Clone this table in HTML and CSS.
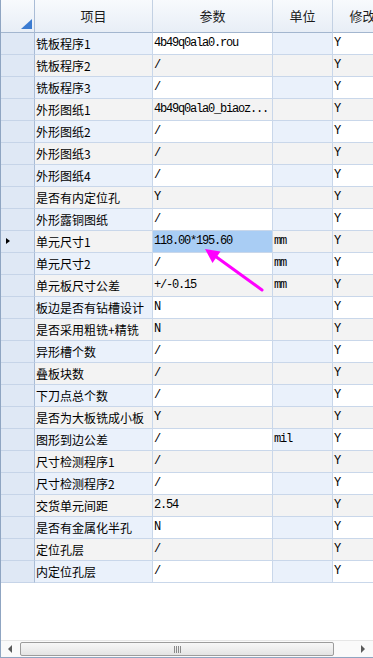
FILE: index.html
```html
<!DOCTYPE html>
<html>
<head>
<meta charset="utf-8">
<link rel="stylesheet" href="styles.css">
</head>
<body>
<div class="grid">
  <div class="row head">
    <div class="c rh corner"><span class="corner-tri"></span></div>
    <div class="c">项目</div>
    <div class="c">参数</div>
    <div class="c">单位</div>
    <div class="c">修改</div>
  </div>
  <div class="rows">
    <div class="row odd"><div class="c rh"></div><div class="c n">铣板程序1</div><div class="c v">4b49q0ala0.rou</div><div class="c u"></div><div class="c m">Y</div></div>
    <div class="row even"><div class="c rh"></div><div class="c n">铣板程序2</div><div class="c v">/</div><div class="c u"></div><div class="c m">Y</div></div>
    <div class="row odd"><div class="c rh"></div><div class="c n">铣板程序3</div><div class="c v">/</div><div class="c u"></div><div class="c m">Y</div></div>
    <div class="row even"><div class="c rh"></div><div class="c n">外形图纸1</div><div class="c v">4b49q0ala0_biaoz...</div><div class="c u"></div><div class="c m">Y</div></div>
    <div class="row odd"><div class="c rh"></div><div class="c n">外形图纸2</div><div class="c v">/</div><div class="c u"></div><div class="c m">Y</div></div>
    <div class="row even"><div class="c rh"></div><div class="c n">外形图纸3</div><div class="c v">/</div><div class="c u"></div><div class="c m">Y</div></div>
    <div class="row odd"><div class="c rh"></div><div class="c n">外形图纸4</div><div class="c v">/</div><div class="c u"></div><div class="c m">Y</div></div>
    <div class="row even"><div class="c rh"></div><div class="c n">是否有内定位孔</div><div class="c v">Y</div><div class="c u"></div><div class="c m">Y</div></div>
    <div class="row odd"><div class="c rh"></div><div class="c n">外形露铜图纸</div><div class="c v">/</div><div class="c u"></div><div class="c m">Y</div></div>
    <div class="row even"><div class="c rh"><span class="cur"></span></div><div class="c n">单元尺寸1</div><div class="c v sel">118.00*195.60</div><div class="c u">mm</div><div class="c m">Y</div></div>
    <div class="row odd"><div class="c rh"></div><div class="c n">单元尺寸2</div><div class="c v">/</div><div class="c u">mm</div><div class="c m">Y</div></div>
    <div class="row even"><div class="c rh"></div><div class="c n">单元板尺寸公差</div><div class="c v">+/-0.15</div><div class="c u">mm</div><div class="c m">Y</div></div>
    <div class="row odd"><div class="c rh"></div><div class="c n">板边是否有钻槽设计</div><div class="c v">N</div><div class="c u"></div><div class="c m">Y</div></div>
    <div class="row even"><div class="c rh"></div><div class="c n">是否采用粗铣+精铣</div><div class="c v">N</div><div class="c u"></div><div class="c m">Y</div></div>
    <div class="row odd"><div class="c rh"></div><div class="c n">异形槽个数</div><div class="c v">/</div><div class="c u"></div><div class="c m">Y</div></div>
    <div class="row even"><div class="c rh"></div><div class="c n">叠板块数</div><div class="c v">/</div><div class="c u"></div><div class="c m">Y</div></div>
    <div class="row odd"><div class="c rh"></div><div class="c n">下刀点总个数</div><div class="c v">/</div><div class="c u"></div><div class="c m">Y</div></div>
    <div class="row even"><div class="c rh"></div><div class="c n">是否为大板铣成小板</div><div class="c v">Y</div><div class="c u"></div><div class="c m">Y</div></div>
    <div class="row odd"><div class="c rh"></div><div class="c n">图形到边公差</div><div class="c v">/</div><div class="c u">mil</div><div class="c m">Y</div></div>
    <div class="row even"><div class="c rh"></div><div class="c n">尺寸检测程序1</div><div class="c v">/</div><div class="c u"></div><div class="c m">Y</div></div>
    <div class="row odd"><div class="c rh"></div><div class="c n">尺寸检测程序2</div><div class="c v">/</div><div class="c u"></div><div class="c m">Y</div></div>
    <div class="row even"><div class="c rh"></div><div class="c n">交货单元间距</div><div class="c v">2.54</div><div class="c u"></div><div class="c m">Y</div></div>
    <div class="row odd"><div class="c rh"></div><div class="c n">是否有金属化半孔</div><div class="c v">N</div><div class="c u"></div><div class="c m">Y</div></div>
    <div class="row even"><div class="c rh"></div><div class="c n">定位孔层</div><div class="c v">/</div><div class="c u"></div><div class="c m">Y</div></div>
    <div class="row odd"><div class="c rh"></div><div class="c n">内定位孔层</div><div class="c v">/</div><div class="c u"></div><div class="c m">Y</div></div>
  </div>
  <div class="hscroll">
    <div class="sbtn"><span class="arr-l"></span></div>
    <div class="thumb"><span class="grip"></span></div>
    <div class="sbtn right"><span class="arr-r"></span></div>
  </div>
  <svg class="pointer" width="373" height="658" viewBox="0 0 373 658">
    <line x1="262" y1="290" x2="215" y2="256" stroke="#f0f" stroke-width="3" stroke-linecap="round"/>
    <polygon points="205,249 220.5,251.5 212.5,263" fill="#f0f"/>
  </svg>
</div>
</body>
</html>
```
FILE: styles.css
```css
html, body {
  margin: 0;
  padding: 0;
  background: #ffffff;
}
.grid {
  position: relative;
  width: 373px;
  height: 658px;
  box-sizing: border-box;
  border-left: 1px solid #8fa5c2;
  border-bottom: 1px solid #8fa5c2;
  overflow: hidden;
  display: flex;
  flex-direction: column;
  background: #ffffff;
}
.row {
  display: grid;
  grid-template-columns: 34px 118px 120px 60px 60px;
  width: 392px;
  flex: none;
}
.c {
  box-sizing: border-box;
  border-right: 1px solid #c9d7ea;
  border-bottom: 1px solid #c9d7ea;
  height: 22px;
  line-height: 21px;
  padding-left: 1px;
  white-space: nowrap;
  overflow: hidden;
  color: #000;
}
.head .c {
  height: 33px;
  line-height: 32px;
  text-align: center;
  padding: 0;
  font-family: "Noto Sans CJK SC", sans-serif;
  font-size: 13px;
  color: #1b1b1b;
  background: linear-gradient(#f8fafd, #e8eef6);
  border-right: 1px solid #c3d1e3;
  border-bottom: 1px solid #a3b6cf;
}
.head .corner {
  position: relative;
  border-right: 1px solid #a9bcd6;
}
.corner-tri {
  position: absolute;
  right: 2px;
  bottom: 3px;
  width: 0;
  height: 0;
  border-left: 11px solid transparent;
  border-bottom: 10px solid #3b7bd1;
}
.rh {
  background: #dfe8f5;
  border-right: 1px solid #a9bcd6;
  border-bottom: 1px solid #c6d4e8;
  position: relative;
}
.cur {
  position: absolute;
  left: 5px;
  top: 7px;
  width: 0;
  height: 0;
  border-top: 3.5px solid transparent;
  border-bottom: 3.5px solid transparent;
  border-left: 4px solid #000;
}
.n {
  font-family: "Noto Sans CJK SC", sans-serif;
  font-size: 12px;
}
.v, .u, .m {
  font-family: "Liberation Mono", monospace;
  font-size: 12px;
  letter-spacing: -1.2px;
}
.m {
  padding-left: 1px;
}
.odd .n, .odd .u {
  background: #eaf1fb;
}
.odd .v, .odd .m {
  background: #ffffff;
}
.even .c.n, .even .c.v, .even .c.u, .even .c.m {
  background: #f3f3f3;
}
.even .c.sel {
  background: #a9cdf4;
}
.rows {
  flex: 1;
  display: flex;
  flex-direction: column;
}
.hscroll {
  flex: none;
  height: 17px;
  display: flex;
  align-items: stretch;
  background: #fafafa;
  border-top: 1px solid #e6e6e6;
  box-sizing: border-box;
}
.sbtn {
  width: 19px;
  flex: none;
  position: relative;
}
.sbtn.right {
  margin-left: auto;
  width: 17px;
}
.arr-l {
  position: absolute;
  left: 7px;
  top: 4px;
  width: 0;
  height: 0;
  border-top: 4px solid transparent;
  border-bottom: 4px solid transparent;
  border-right: 4px solid #5a5a5a;
}
.arr-r {
  position: absolute;
  left: 5px;
  top: 4px;
  width: 0;
  height: 0;
  border-top: 4px solid transparent;
  border-bottom: 4px solid transparent;
  border-left: 4px solid #5a5a5a;
}
.thumb {
  width: 314px;
  flex: none;
  margin: 1px 0 1px 0;
  box-sizing: border-box;
  border: 1px solid #9c9c9c;
  border-radius: 2px;
  background: linear-gradient(#f7f7f7, #e4e4e4);
  display: flex;
  align-items: center;
  justify-content: center;
}
.grip {
  width: 7px;
  height: 7px;
  background: repeating-linear-gradient(90deg, #8a8a8a 0 1px, transparent 1px 2px);
}
.pointer {
  position: absolute;
  left: -1px;
  top: 0;
  pointer-events: none;
}
```
